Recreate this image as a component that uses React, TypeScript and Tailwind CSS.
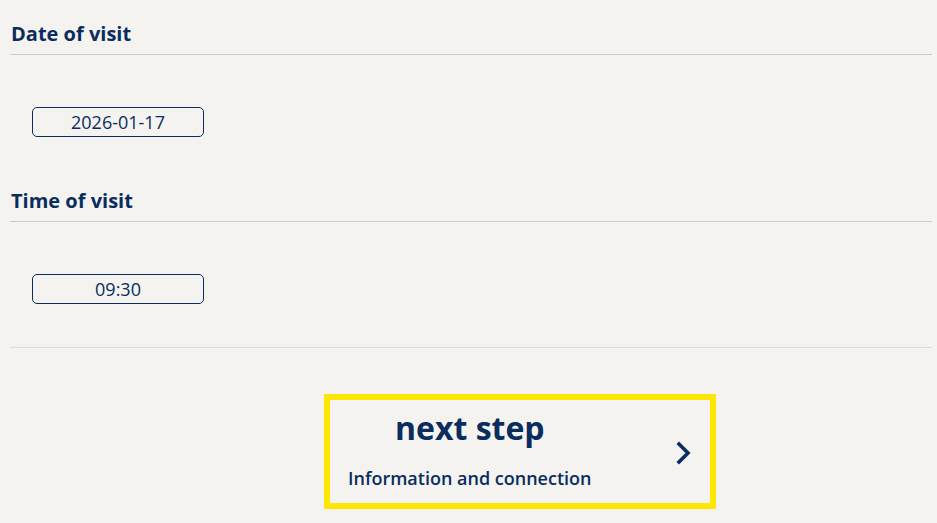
function Section({ title, value }: { title: string; value: string }) {
    return (
        <div className="flex flex-col">
            <h2 className="pl-[11px] pt-[20px] text-[20px] font-bold leading-[28px] text-[#0a2d5e]">{title}</h2>
            <div className="ml-[10px] mr-[5px] mt-[6px] h-px bg-[#c9c9d9]" />
            <div className="pl-[32px] pt-[52px]">
                <div className="flex h-[30px] w-[172px] items-center justify-center rounded-[5px] border border-[#0a2d5e] text-[18px] text-[#0a2d5e]">
                    {value}
                </div>
            </div>
        </div>
    );
}

export default function App() {
    return (
        <div className="min-h-[523px] w-[937px] bg-[#f4f3f0] font-['Open_Sans',sans-serif]">
            <Section title="Date of visit" value="2026-01-17" />
            <div className="mt-[30px]">
                <Section title="Time of visit" value="09:30" />
            </div>
            <div className="ml-[10px] mr-[5px] mt-[43px] h-px bg-[#dcdcdc]" />
            <div className="flex justify-center pt-[46px] pl-[103px]">
                <button className="flex h-[115px] w-[392px] items-start border-[6px] border-[#ffe600] pl-[18px] pr-[18px] pt-[8px] text-[#0a2d5e]">
                    <div className="flex flex-1 flex-col items-start">
                        <span className="ml-[47px] text-[32px] font-bold leading-[40px]">next step</span>
                        <span className="mt-[18px] text-[18px] font-semibold leading-[24px]">Information and connection</span>
                    </div>
                    <svg width="16" height="24" viewBox="0 0 16 24" fill="none" className="mt-[33px]">
                        <polyline points="3,3 12,12 3,21" stroke="currentColor" strokeWidth="3.6" strokeLinecap="square" strokeLinejoin="miter" />
                    </svg>
                </button>
            </div>
        </div>
    );
}
